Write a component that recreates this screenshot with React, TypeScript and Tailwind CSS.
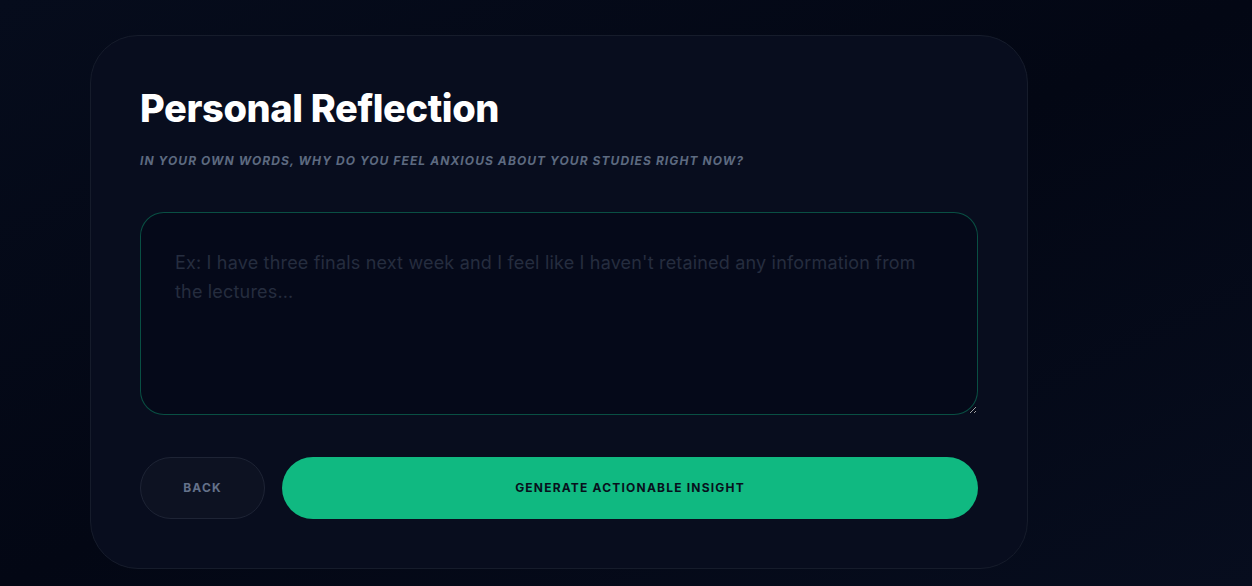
import React from "react";

const App = () => {
  return (
    <div
      className="min-h-screen w-full bg-[#040816] bg-gradient-to-br from-[#060c1c] via-[#030714] to-[#070d1e] pl-[90px] pt-[35px] pb-[17px]"
      style={{ fontFamily: "Inter, 'Noto Sans', sans-serif" }}
    >
      <div className="w-[938px] rounded-[48px] border border-[#161c2b] bg-[#080d1e] px-[49px] pt-[49px] pb-[49px]">
        <h1 className="text-[38px] leading-[46px] font-extrabold tracking-[-0.01em] text-white">
          Personal Reflection
        </h1>
        <p className="mt-[22px] text-[12px] leading-4 font-bold italic uppercase tracking-[0.09em] text-[#5d6a80]">
          In your own words, why do you feel anxious about your studies right now?
        </p>
        <textarea
          className="mt-[43px] block h-[203px] w-full rounded-[24px] border border-[#10b981]/40 bg-[#050919] pl-[34px] pr-[60px] py-[35px] text-[18px] leading-[29px] tracking-[0.01em] text-slate-200 outline-none placeholder:text-[#252d3f]"
          placeholder="Ex: I have three finals next week and I feel like I haven't retained any information from the lectures..."
        />
        <div className="mt-[42px] flex gap-[17px]">
          <button className="h-[62px] w-[125px] rounded-full border border-[#1e2435] bg-[#0d1222] text-[12px] font-bold tracking-[0.1em] text-[#64718a]">
            BACK
          </button>
          <button className="h-[62px] flex-1 rounded-full bg-[#10b981] text-[12px] font-bold tracking-[0.1em] text-[#08101c]">
            GENERATE ACTIONABLE INSIGHT
          </button>
        </div>
      </div>
    </div>
  );
};

export default App;
